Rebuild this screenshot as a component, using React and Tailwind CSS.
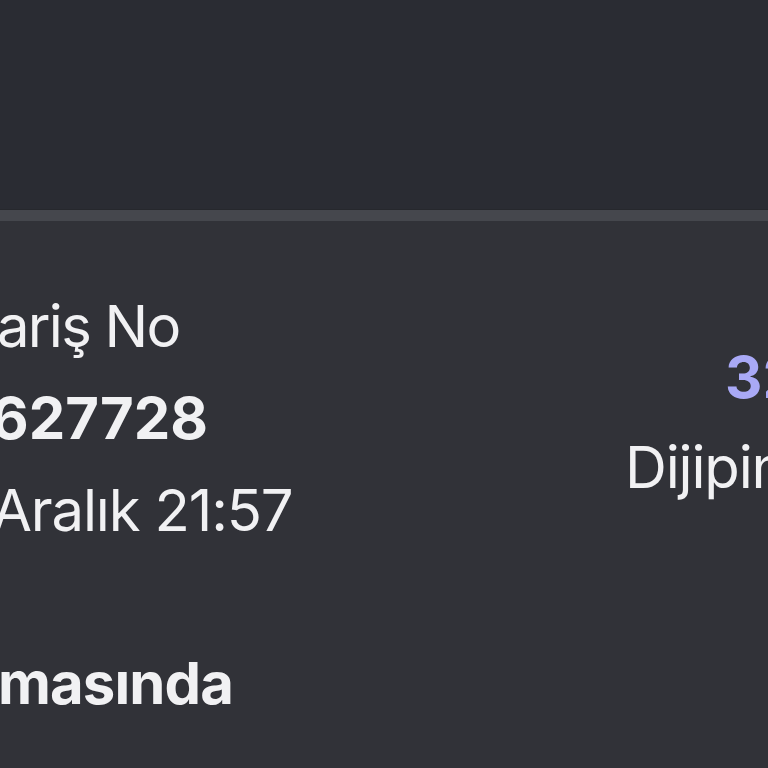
export default function App() {
  return (
    <div
      className="w-[768px] h-[768px] overflow-hidden bg-[#313238] text-[#f1f1f3]"
      style={{ fontFamily: "Inter, 'Noto Sans', sans-serif" }}
    >
      <div className="h-[209px] bg-[#2a2c33]" />
      <div className="h-px bg-[#26282d]" />
      <div className="h-[11px] bg-[#45474d]" />

      <div className="flex justify-between pt-[59px] text-[58px] leading-[92px] whitespace-nowrap">
        <div className="flex flex-col">
          <span className="-ml-[3px] tracking-[-0.03em]">ariş No</span>
          <span className="-ml-[9px] font-bold">627728</span>
          <span className="-ml-[8px] tracking-[-0.02em]">Aralık 21:57</span>
          <span className="-ml-[2px] mt-[81px] font-bold tracking-[-0.015em]">masında</span>
        </div>
        <div className="flex flex-col w-[143px] shrink-0 pt-[52px]">
          <span className="ml-[100px] font-bold text-[#a9a9f6] leading-[90px]">32</span>
          <span className="leading-[90px] tracking-[-0.02em]">Dijipin</span>
        </div>
      </div>
    </div>
  );
}
